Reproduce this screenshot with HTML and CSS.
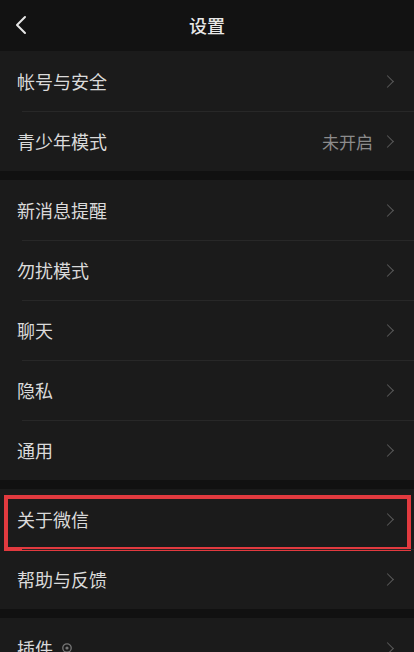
FILE: index.html
```html
<!DOCTYPE html>
<html lang="zh-CN">
<head>
<meta charset="utf-8">
<title>设置</title>
<link rel="stylesheet" href="styles.css">
</head>
<body>
<div class="screen">
  <header class="topbar">
    <span class="back">
      <svg width="12" height="20" viewBox="0 0 12 20"><path d="M10 2 L2 10 L10 18" fill="none" stroke="#e6e6e6" stroke-width="2" stroke-linecap="round" stroke-linejoin="round"/></svg>
    </span>
    <h1 class="title">设置</h1>
  </header>

  <section class="group">
    <div class="row"><span class="label">帐号与安全</span><span class="chev"></span></div>
    <div class="row"><span class="label">青少年模式</span><span class="value">未开启</span><span class="chev"></span></div>
  </section>

  <section class="group">
    <div class="row"><span class="label">新消息提醒</span><span class="chev"></span></div>
    <div class="row"><span class="label">勿扰模式</span><span class="chev"></span></div>
    <div class="row"><span class="label">聊天</span><span class="chev"></span></div>
    <div class="row"><span class="label">隐私</span><span class="chev"></span></div>
    <div class="row"><span class="label">通用</span><span class="chev"></span></div>
  </section>

  <section class="group">
    <div class="row highlighted"><span class="label">关于微信</span><span class="chev"></span><span class="redbox"></span></div>
    <div class="row"><span class="label">帮助与反馈</span><span class="chev"></span></div>
  </section>

  <section class="group">
    <div class="row"><span class="label">插件</span>
      <svg class="plug" width="12" height="12" viewBox="0 0 12 12"><circle cx="6" cy="6" r="4.2" fill="none" stroke="#777" stroke-width="1.3"/><circle cx="6" cy="6" r="1.6" fill="#777"/></svg>
      <span class="chev"></span></div>
  </section>
</div>
</body>
</html>
```

FILE: styles.css
```css
* { box-sizing: border-box; }
html, body { margin: 0; padding: 0; background: #111111; }
body {
  font-family: "Noto Sans CJK SC", "Noto Sans", sans-serif;
  color: #d9d9d9;
}
.screen { width: 414px; height: 652px; overflow: hidden; background: #111111; }

.topbar {
  height: 51px;
  background: #121212;
  display: flex;
  align-items: center;
  justify-content: center;
  position: relative;
}
.back {
  position: absolute;
  left: 15px;
  top: 15px;
  display: flex;
}
.title {
  margin: 0;
  font-size: 18px;
  font-weight: 500;
  color: #e8e8e8;
  line-height: 1;
  margin-top: -2px;
}

.group {
  background: #1b1b1b;
  margin-bottom: 9px;
}
.row {
  height: 60px;
  display: flex;
  align-items: center;
  padding: 0 20px 0 17px;
  position: relative;
}
.row + .row::before {
  content: "";
  position: absolute;
  top: 0;
  left: 22px;
  right: 0;
  height: 1px;
  background: #282828;
}
.label {
  font-size: 18px;
  color: #dadada;
  line-height: 1;
  flex: 0 0 auto;
}
.value {
  margin-left: auto;
  font-size: 17px;
  color: #8c8c8c;
  margin-right: 10px;
  line-height: 1;
}
.chev {
  width: 9px;
  height: 9px;
  border-top: 1.6px solid #5a5a5a;
  border-right: 1.6px solid #5a5a5a;
  transform: rotate(45deg);
  margin-left: auto;
  margin-right: 2px;
}
.value + .chev { margin-left: 0; }
.plug { margin-left: 8px; }

.redbox {
  position: absolute;
  left: 4px;
  right: 3px;
  top: 6px;
  bottom: -2px;
  border: 4px solid #e23a3f;
  pointer-events: none;
}
.highlighted::before { display: none; }
```
